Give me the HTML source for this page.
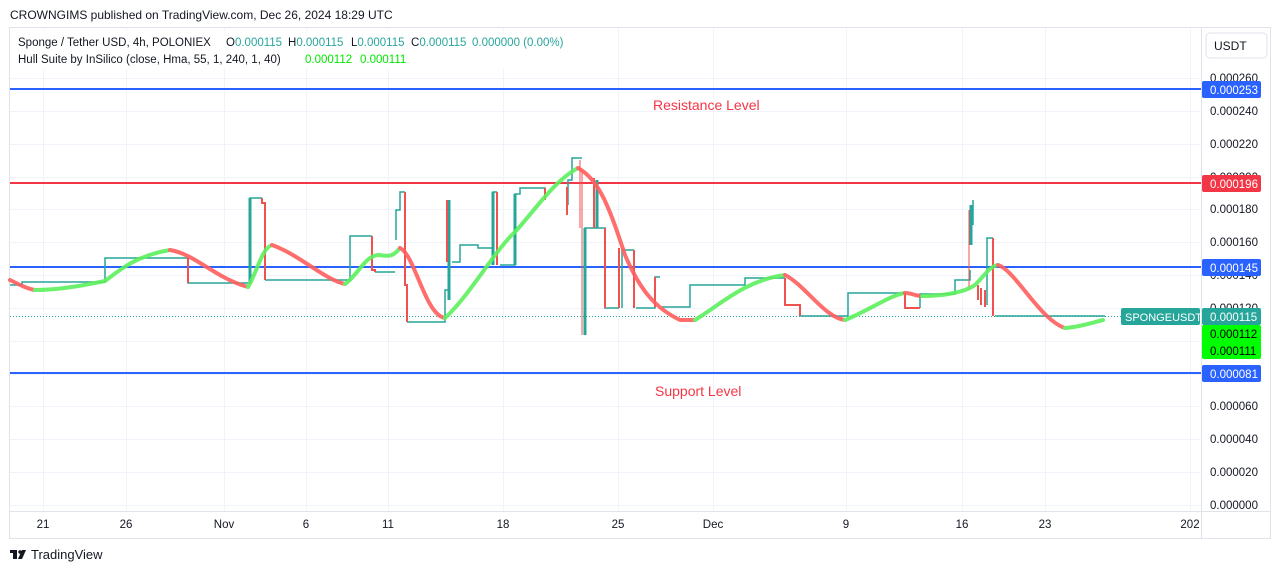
<!DOCTYPE html>
<html><head><meta charset="utf-8"><style>
body{margin:0;width:1281px;height:573px;background:#fff;overflow:hidden;font-family:"Liberation Sans",sans-serif;}
svg{position:absolute;left:0;top:0}
</style></head><body>
<svg width="1281" height="573" viewBox="0 0 1281 573" xmlns="http://www.w3.org/2000/svg" font-family="Liberation Sans, sans-serif">
<text x="10" y="19" font-size="12" fill="#131722">CROWNGIMS published on TradingView.com, Dec 26, 2024 18:29 UTC</text>
<rect x="9.5" y="27.5" width="1261" height="511" fill="none" stroke="#e0e3eb"/>
<line x1="1201.5" y1="28" x2="1201.5" y2="538" stroke="#e0e3eb"/>
<line x1="10" y1="511.5" x2="1270" y2="511.5" stroke="#e0e3eb"/>
<g stroke="#f0f3fa" stroke-width="1">
<line x1="10" x2="1201" y1="78.5" y2="78.5"/><line x1="10" x2="1201" y1="111.5" y2="111.5"/><line x1="10" x2="1201" y1="144.5" y2="144.5"/><line x1="10" x2="1201" y1="177.5" y2="177.5"/><line x1="10" x2="1201" y1="209.5" y2="209.5"/><line x1="10" x2="1201" y1="242.5" y2="242.5"/><line x1="10" x2="1201" y1="275.5" y2="275.5"/><line x1="10" x2="1201" y1="308.5" y2="308.5"/><line x1="10" x2="1201" y1="341.5" y2="341.5"/><line x1="10" x2="1201" y1="374.5" y2="374.5"/><line x1="10" x2="1201" y1="406.5" y2="406.5"/><line x1="10" x2="1201" y1="439.5" y2="439.5"/><line x1="10" x2="1201" y1="472.5" y2="472.5"/><line x1="10" x2="1201" y1="505.5" y2="505.5"/>
<line x1="43.5" x2="43.5" y1="28" y2="511"/><line x1="126.5" x2="126.5" y1="28" y2="511"/><line x1="224.5" x2="224.5" y1="28" y2="511"/><line x1="306.5" x2="306.5" y1="28" y2="511"/><line x1="388.5" x2="388.5" y1="28" y2="511"/><line x1="503.5" x2="503.5" y1="28" y2="511"/><line x1="618.5" x2="618.5" y1="28" y2="511"/><line x1="713.5" x2="713.5" y1="28" y2="511"/><line x1="846.5" x2="846.5" y1="28" y2="511"/><line x1="962.5" x2="962.5" y1="28" y2="511"/><line x1="1045.5" x2="1045.5" y1="28" y2="511"/><line x1="1190.5" x2="1190.5" y1="28" y2="511"/>
</g>
<rect x="12" y="31" width="560" height="38" fill="#fff"/>
<text x="18" y="46" font-size="11.5" fill="#131722">Sponge / Tether USD, 4h, POLONIEX</text>
<text x="226" y="46" font-size="11.5" fill="#131722">O<tspan fill="#26a69a">0.000115</tspan></text>
<text x="288" y="46" font-size="11.5" fill="#131722">H<tspan fill="#26a69a">0.000115</tspan></text>
<text x="351" y="46" font-size="11.5" fill="#131722">L<tspan fill="#26a69a">0.000115</tspan></text>
<text x="411" y="46" font-size="11.5" fill="#131722">C<tspan fill="#26a69a">0.000115</tspan></text>
<text x="472" y="46" font-size="11.5" fill="#26a69a">0.000000 (0.00%)</text>
<text x="18" y="63" font-size="11.5" fill="#131722">Hull Suite by InSilico (close, Hma, 55, 1, 240, 1, 40)</text>
<text x="305" y="63" font-size="11.5" fill="#00e600">0.000112</text>
<text x="360" y="63" font-size="11.5" fill="#00e600">0.000111</text>
<line x1="10" x2="1201" y1="89" y2="89" stroke="#2962ff" stroke-width="2"/>
<line x1="10" x2="1201" y1="183" y2="183" stroke="#f23645" stroke-width="2"/>
<line x1="10" x2="1201" y1="267" y2="267" stroke="#2962ff" stroke-width="2"/>
<line x1="10" x2="1201" y1="373" y2="373" stroke="#2962ff" stroke-width="2"/>
<line x1="10" x2="1201" y1="316.5" y2="316.5" stroke="#26a69a" stroke-dasharray="1 2"/>
<text x="653" y="110" font-size="14" fill="#f23645">Resistance Level</text>
<text x="655" y="396" font-size="14" fill="#f23645">Support Level</text>
<g fill="none" stroke="#26a69a" stroke-width="1.5">
<path d="M10,285 H22 V282 H105 V258 H188 V283 H250 V198 H262"/>
<path d="M265,280 H350 V236 H372"/>
<path d="M375,272 H395"/>
<path d="M396,240 V210 H400 V192 H405"/>
<path d="M407,322 H445 V290 H449 V200"/>
<path d="M452,262 H460 V245 H478 V248 H493 V192 H497"/>
<path d="M500,265 H515 V194 H520 V188 H545 V200"/>
<path d="M568,205 V180 H572 V158 H582"/>
<path d="M585,335 V228 H605 V308 H619"/>
<path d="M622,308 V250 H634"/>
<path d="M636,308 H655 V277 H660"/>
<path d="M662,307 H690 V285 H745 V278 H785"/>
<path d="M800,316 H848 V293 H905"/>
<path d="M920,308 V294 H955 V280 H970 V270"/>
<path d="M971,245 V205 M973,200 V225"/>
<path d="M987,305 V238 H993"/>
<path d="M995,316 H1105"/>
</g>
<g stroke="#26a69a" stroke-width="3">
<line x1="250" y1="198" x2="250" y2="283"/><line x1="449" y1="200" x2="449" y2="300"/><line x1="493" y1="192" x2="493" y2="265"/><line x1="515" y1="194" x2="515" y2="265"/><line x1="585" y1="228" x2="585" y2="335"/><line x1="597" y1="180" x2="597" y2="228"/><line x1="971" y1="205" x2="971" y2="245"/>
</g>
<g fill="none" stroke="#ef5350" stroke-width="2">
<path d="M262,198 V203 H265 V280"/>
<path d="M188,258 V283"/>
<path d="M372,236 V270 H375 V272"/>
<path d="M405,192 V285 H407 V322"/>
<path d="M447,200 V262"/>
<path d="M497,192 V265"/>
<path d="M545,188 V200"/>
<path d="M567,187 V215"/>
<path d="M580,160 V228" stroke-width="1"/>
<path d="M582,170 V335" stroke-width="1"/>
<path d="M594,178 V228"/>
<path d="M605,228 V308"/>
<path d="M619,248 V308"/>
<path d="M634,250 V308"/>
<path d="M655,277 V307"/>
<path d="M785,278 V305 H800 V316"/>
<path d="M905,293 V308 H920"/>
<path d="M969,210 V290" stroke-width="1"/>
<path d="M978,285 V300 M981,288 V305 M985,290 V307"/>
<path d="M993,238 V316"/>
</g>
<g fill="none" stroke-width="4" stroke-linecap="round" stroke-linejoin="round" opacity="0.9">
<path stroke="#ff5e5e" d="M10,280 C20,285 28,289 35,290"/>
<path stroke="#5cf05c" d="M35,290 C60,290 85,285 105,281 C120,270 135,256 170,250"/>
<path stroke="#ff5e5e" d="M170,250 C195,254 215,278 248,287"/>
<path stroke="#5cf05c" d="M248,287 C258,270 262,248 272,245"/>
<path stroke="#ff5e5e" d="M272,245 C300,255 325,280 345,284"/>
<path stroke="#5cf05c" d="M345,284 C358,275 365,256 378,255 C388,256 392,258 400,248"/>
<path stroke="#ff5e5e" d="M400,248 C415,255 425,315 445,318"/>
<path stroke="#5cf05c" d="M445,318 C470,295 495,250 515,232 C535,210 555,180 578,168"/>
<path stroke="#ff5e5e" d="M578,168 C600,180 610,210 625,255 C640,290 655,308 680,320 L695,320"/>
<path stroke="#5cf05c" d="M695,320 C720,305 745,280 785,275"/>
<path stroke="#ff5e5e" d="M785,275 C805,285 825,318 845,320"/>
<path stroke="#5cf05c" d="M845,320 C870,310 890,295 905,293"/>
<path stroke="#ff5e5e" d="M905,293 C912,293 915,296 922,296"/>
<path stroke="#5cf05c" d="M922,296 C945,296 965,292 975,285 C985,275 990,266 998,265"/>
<path stroke="#ff5e5e" d="M998,265 C1015,270 1040,320 1065,328"/>
<path stroke="#5cf05c" d="M1065,328 C1080,327 1095,322 1103,320"/>
</g>
<rect x="1206" y="33" width="61" height="25" rx="4" fill="#fff" stroke="#e0e3eb"/>
<text x="1214" y="50" font-size="12" fill="#131722">USDT</text>
<g font-size="11.5" fill="#131722">
<text x="1210" y="82">0.000260</text><text x="1210" y="115">0.000240</text><text x="1210" y="148">0.000220</text><text x="1210" y="181">0.000200</text><text x="1210" y="213">0.000180</text><text x="1210" y="246">0.000160</text><text x="1210" y="279">0.000140</text><text x="1210" y="312">0.000120</text><text x="1210" y="410">0.000060</text><text x="1210" y="443">0.000040</text><text x="1210" y="476">0.000020</text><text x="1210" y="509">0.000000</text>
</g>
<g font-size="11.5" fill="#fff">
<rect x="1202" y="81" width="59" height="17" rx="2" fill="#2962ff"/><text x="1210" y="94">0.000253</text>
<rect x="1202" y="175" width="59" height="17" rx="2" fill="#f23645"/><text x="1210" y="188">0.000196</text>
<rect x="1202" y="259" width="59" height="17" rx="2" fill="#2962ff"/><text x="1210" y="272">0.000145</text>
<rect x="1121" y="308" width="79" height="17" rx="2" fill="#26a69a"/><text x="1125" y="321" font-size="11">SPONGEUSDT</text>
<rect x="1202" y="308" width="59" height="17" rx="2" fill="#26a69a"/><text x="1210" y="321">0.000115</text>
<rect x="1202" y="325" width="59" height="34" rx="2" fill="#00ff00"/><text x="1210" y="338" fill="#000">0.000112</text><text x="1210" y="355" fill="#000">0.000111</text>
<rect x="1202" y="365" width="59" height="17" rx="2" fill="#2962ff"/><text x="1210" y="378">0.000081</text>
</g>
<g font-size="11.5" fill="#131722" text-anchor="middle">
<text x="43" y="528">21</text><text x="126" y="528">26</text><text x="224" y="528">Nov</text><text x="306" y="528">6</text><text x="388" y="528">11</text><text x="503" y="528">18</text><text x="618" y="528">25</text><text x="713" y="528">Dec</text><text x="846" y="528">9</text><text x="962" y="528">16</text><text x="1045" y="528">23</text><text x="1190" y="528">202</text>
</g>
<g fill="#131722">
<rect x="10" y="550" width="7" height="3"/><rect x="13" y="550" width="4" height="9"/>
<circle cx="20" cy="552" r="1.7"/><path d="M22,550 H26 L22,559 H18 Z"/>
</g>
<text x="31" y="559" font-size="13" fill="#131722">TradingView</text>
</svg>
</body></html>
